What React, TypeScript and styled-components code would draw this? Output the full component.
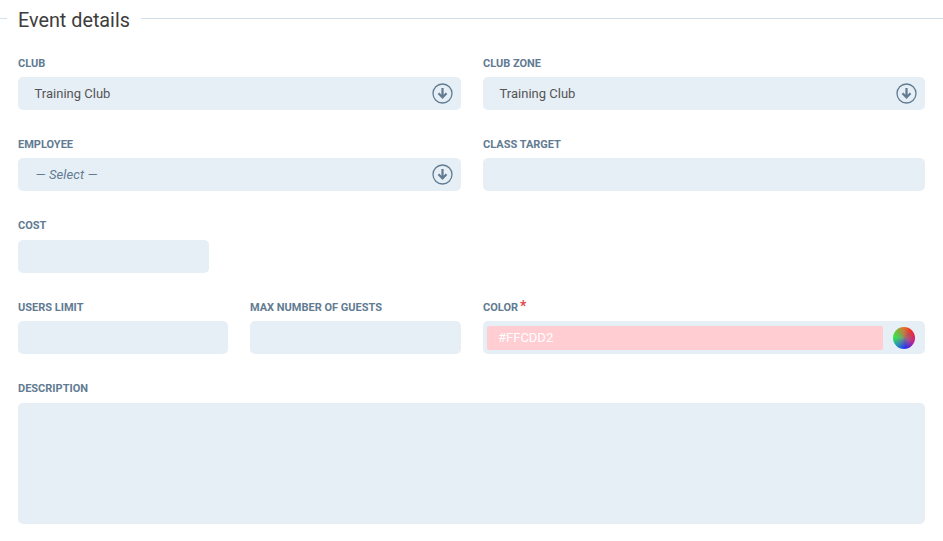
import React from 'react';
import styled, { createGlobalStyle } from 'styled-components';

const GlobalStyle = createGlobalStyle`
  html, body {
    margin: 0;
    padding: 0;
    background: #fff;
    font-family: Roboto, "Liberation Sans", sans-serif;
  }
`;

const Page = styled.div`
  width: 943px;
  height: 541px;
  overflow: hidden;
  box-sizing: border-box;
`;

const Legend = styled.div`
  display: flex;
  align-items: flex-start;
  height: 40px;
  margin-bottom: 16.6px;
`;

const LegendLine = styled.div<{ $grow?: boolean }>`
  height: 1px;
  margin-top: 18px;
  background: #d5e1ea;
  width: 7px;
  ${(p) => p.$grow && 'flex: 1;'}
`;

const LegendText = styled.h2`
  margin: 0 11px;
  font-size: 19.8px;
  font-weight: 400;
  line-height: 41px;
  color: #3d3d3d;
`;

const Form = styled.div`
  display: grid;
  grid-template-columns: 210px 211px 442px;
  column-gap: 22px;
  row-gap: 28px;
  padding: 0 18px;
`;

const Field = styled.div<{ $span?: number; $width?: number }>`
  grid-column: span ${(p) => p.$span ?? 1};
  ${(p) => p.$width && `width: ${p.$width}px;`}
`;

const Label = styled.label`
  display: block;
  height: 14.4px;
  margin-bottom: 6px;
  font-size: 11px;
  line-height: 14px;
  font-weight: 700;
  color: #617b92;
  text-transform: uppercase;
`;

const Required = styled.span`
  color: #e04848;
  font-size: 14px;
  line-height: 10px;
  margin-left: 2px;
`;

const Input = styled.div<{ $height?: number }>`
  position: relative;
  display: flex;
  align-items: center;
  box-sizing: border-box;
  height: ${(p) => p.$height ?? 33}px;
  padding-left: 16.6px;
  border-radius: 5px;
  background: #e6eef6;
  font-size: 13px;
  color: #555;
`;

const Placeholder = styled.span`
  margin-left: 1px;
  font-style: italic;
  letter-spacing: 0.1px;
  color: #617b92;
`;

const SelectIcon = styled.svg`
  position: absolute;
  right: 8px;
  top: 6px;
  width: 21px;
  height: 21px;
`;

const ColorInput = styled(Input)`
  padding: 5px 10px 5px 4px;
  gap: 10px;
`;

const ColorValue = styled.div`
  flex: 1;
  height: 24px;
  padding-left: 11px;
  border-radius: 2px;
  background: #ffcdd2;
  color: #fff;
  font-size: 13px;
  line-height: 24px;
`;

const ColorWheel = styled.div`
  flex: none;
  width: 22px;
  height: 22px;
  border-radius: 50%;
  background:
    radial-gradient(circle at center, rgba(135, 140, 120, 0.8) 0%, rgba(135, 140, 120, 0) 65%),
    conic-gradient(from 0deg, #e8702a 0deg, #f02a2a 45deg, #c8208a 110deg, #2a2af8 170deg, #1f9fb0 230deg, #30ee48 275deg, #88b030 325deg, #e8702a 360deg);
`;

const ArrowIcon = () => (
  <SelectIcon viewBox="0 0 21 21" fill="none">
    <circle cx="10.5" cy="10.5" r="9.5" stroke="#617b92" strokeWidth="1.3" />
    <path d="M10.5 5v9.5M6.5 10.3l4 4.2 4-4.2" stroke="#617b92" strokeWidth="2.2" />
  </SelectIcon>
);

const App: React.FC = () => (
  <Page>
    <GlobalStyle />
    <Legend>
      <LegendLine />
      <LegendText>Event details</LegendText>
      <LegendLine $grow />
    </Legend>
    <Form>
      <Field $span={2}>
        <Label>Club</Label>
        <Input>
          Training Club
          <ArrowIcon />
        </Input>
      </Field>
      <Field>
        <Label>Club zone</Label>
        <Input>
          Training Club
          <ArrowIcon />
        </Input>
      </Field>
      <Field $span={2}>
        <Label>Employee</Label>
        <Input>
          <Placeholder>— Select —</Placeholder>
          <ArrowIcon />
        </Input>
      </Field>
      <Field>
        <Label>Class target</Label>
        <Input />
      </Field>
      <Field $span={3} $width={191}>
        <Label>Cost</Label>
        <Input />
      </Field>
      <Field>
        <Label>Users limit</Label>
        <Input />
      </Field>
      <Field>
        <Label>Max number of guests</Label>
        <Input />
      </Field>
      <Field>
        <Label>
          Color<Required>*</Required>
        </Label>
        <ColorInput>
          <ColorValue>#FFCDD2</ColorValue>
          <ColorWheel />
        </ColorInput>
      </Field>
      <Field $span={3}>
        <Label>Description</Label>
        <Input $height={121} />
      </Field>
    </Form>
  </Page>
);

export default App;
